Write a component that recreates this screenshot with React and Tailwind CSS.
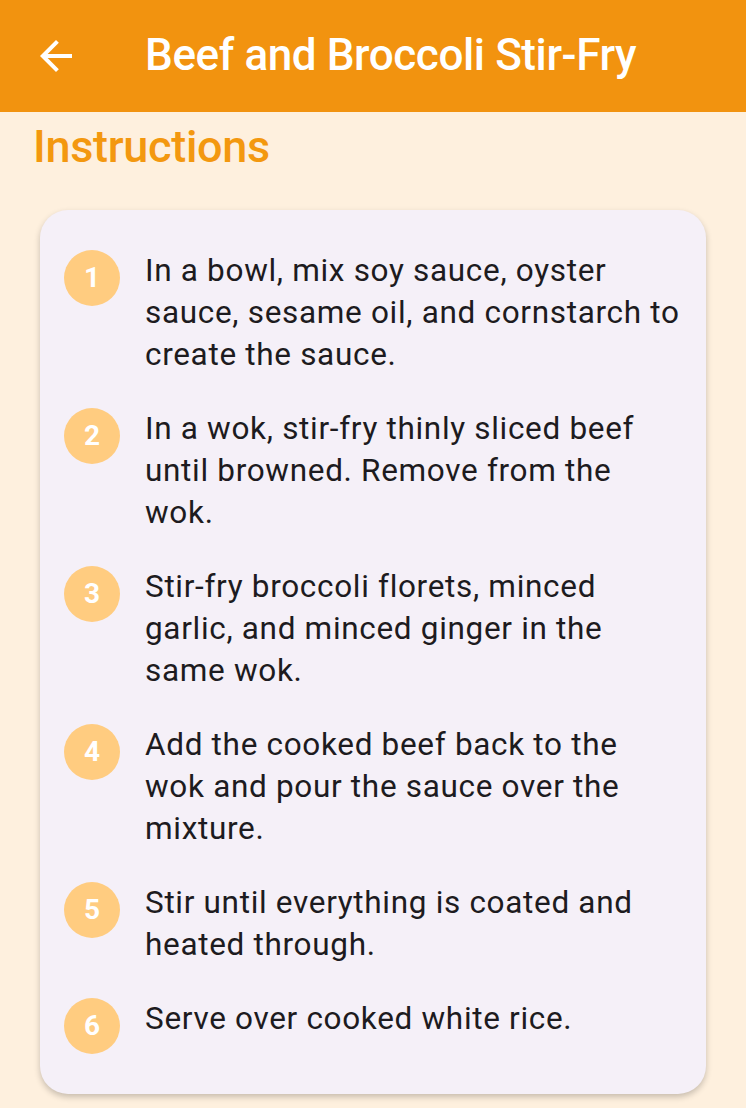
const steps = [
  'In a bowl, mix soy sauce, oyster sauce, sesame oil, and cornstarch to create the sauce.',
  'In a wok, stir-fry thinly sliced beef until browned. Remove from the wok.',
  'Stir-fry broccoli florets, minced garlic, and minced ginger in the same wok.',
  'Add the cooked beef back to the wok and pour the sauce over the mixture.',
  'Stir until everything is coated and heated through.',
  'Serve over cooked white rice.',
];

export default function App() {
  return (
    <div className="min-h-[1108px] bg-[#fef0de] font-['Roboto',sans-serif]">
      {/* App bar */}
      <header className="h-[112px] bg-[#f2930f] flex items-center">
        <button className="ml-[32px] w-[48px] h-[48px] flex items-center justify-center text-white">
          <svg width="48" height="48" viewBox="0 0 24 24" fill="currentColor">
            <path d="M20 11H7.83l5.59-5.59L12 4l-8 8 8 8 1.41-1.41L7.83 13H20v-2z" />
          </svg>
        </button>
        <h1 className="ml-[65px] text-white text-[44px] font-medium tracking-[-0.4px] leading-none pb-[2px]">
          Beef and Broccoli Stir-Fry
        </h1>
      </header>

      <div className="px-[33px] pt-[10px]">
        <h2 className="text-[#f3980f] text-[45px] font-medium tracking-[-0.3px] leading-[50px]">
          Instructions
        </h2>
      </div>

      {/* Steps card */}
      <div className="mx-[40px] mt-[38px] bg-[#f5f0f8] rounded-[28px] shadow-[0_3px_6px_rgba(0,0,0,0.22)] pl-[24px] pr-[24px] py-[40px] flex flex-col gap-[32px]">
        {steps.map((text, i) => (
          <div key={i} className="flex items-start gap-[25px]">
            <div className="w-[56px] h-[56px] shrink-0 rounded-full bg-[#ffcc80] flex items-center justify-center text-white text-[28px] font-bold">
              {i + 1}
            </div>
            <p className="text-[#1d1b20] text-[31.5px] leading-[42px] tracking-[0.68px]">
              {text}
            </p>
          </div>
        ))}
      </div>
    </div>
  );
}
